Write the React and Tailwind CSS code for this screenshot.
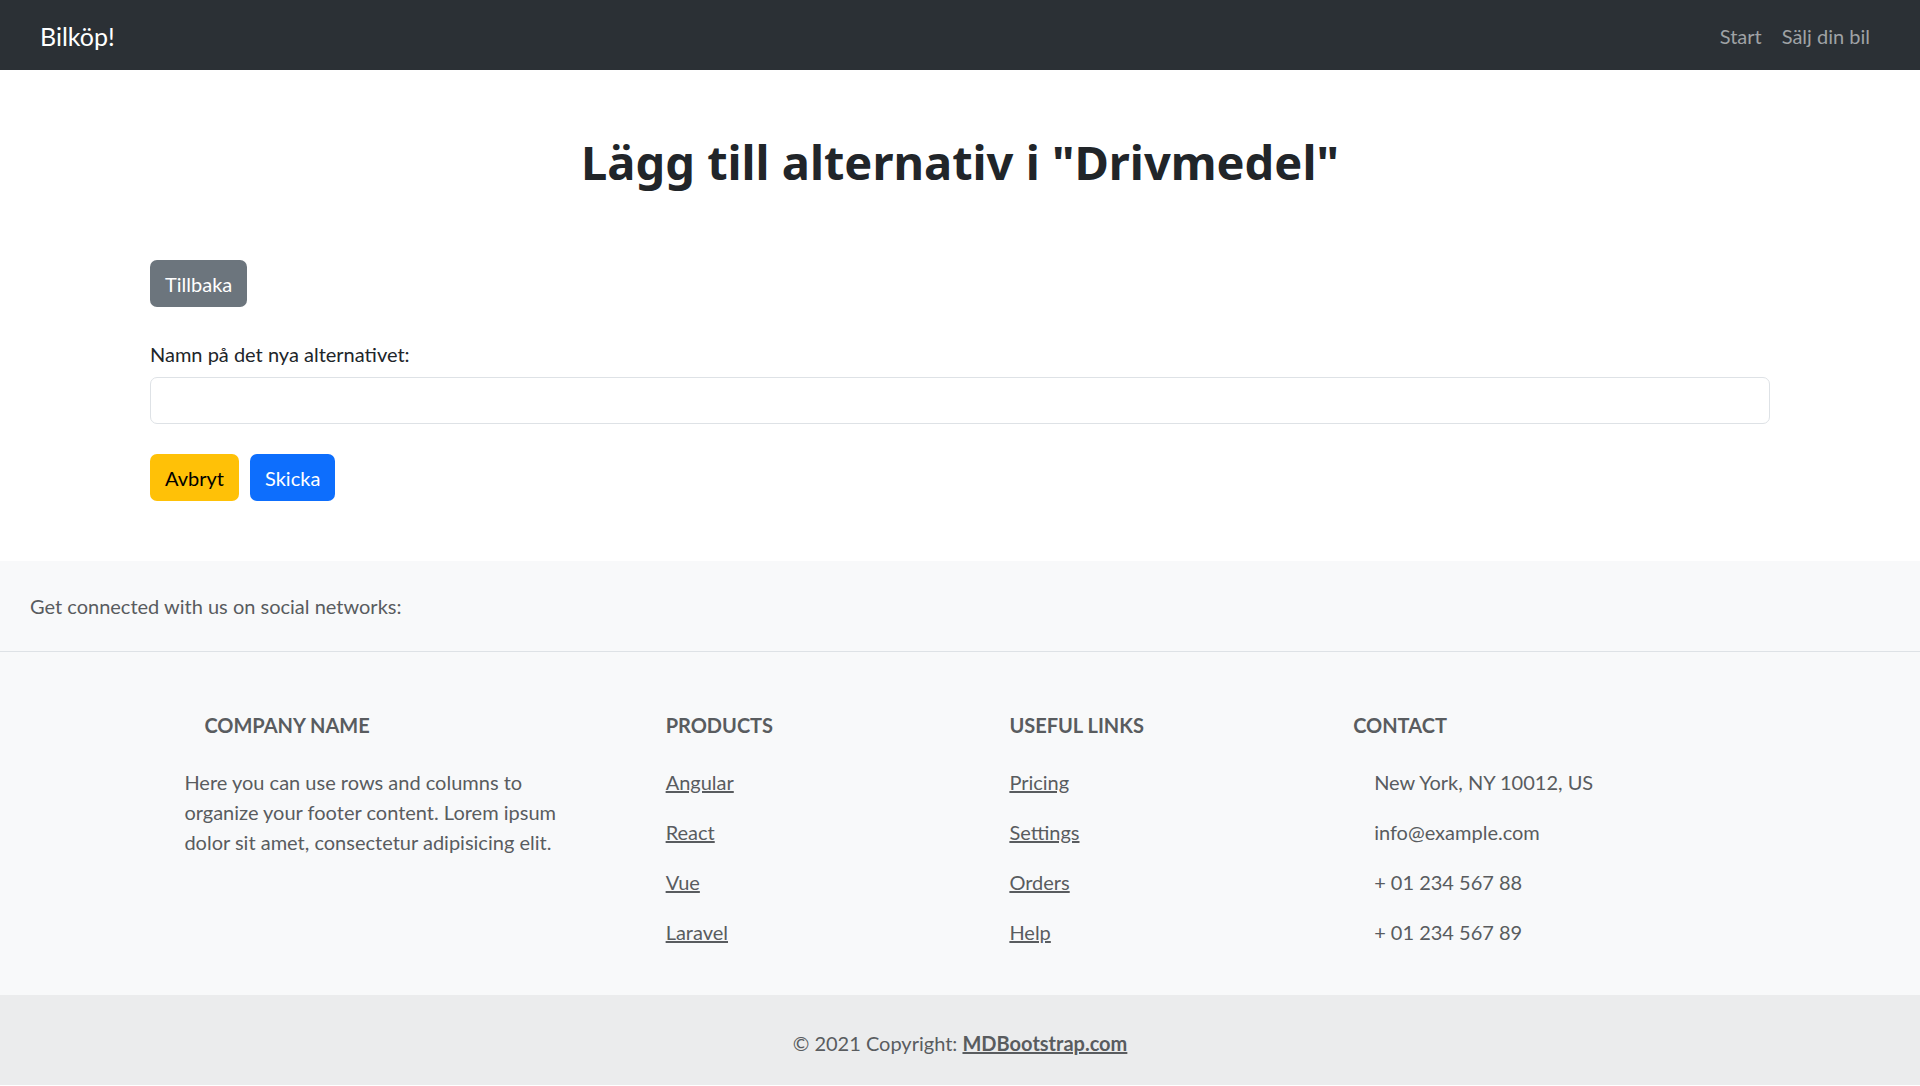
export default function App() {
  return (
    <div className="min-h-screen bg-white font-['Lato','Noto_Sans',sans-serif] text-[20px] leading-[30px] text-[#212529]">
      {/* Navbar */}
      <nav className="h-[70px] bg-[#2b3035] flex items-center justify-between pl-[40px] pr-[40px]">
        <a href="#" className="text-[25px] leading-[37px] mt-[2px] text-white">
          Bilköp!
        </a>
        <div className="flex items-center mt-[2px]">
          <a href="#" className="px-[10px] text-[20px] text-[#9fa2a5]">
            Start
          </a>
          <a href="#" className="px-[10px] text-[20px] text-[#9fa2a5]">
            Sälj din bil
          </a>
        </div>
      </nav>

      {/* Main */}
      <main className="mx-auto w-[1650px] px-[15px]">
        <h1 className="mt-[65px] text-center font-['Noto_Sans',sans-serif] text-[47px] leading-[55px] font-bold text-[#212529]">
          Lägg till alternativ i "Drivmedel"
        </h1>

        <div className="mt-[70px]">
          <button className="h-[47px] px-[15px] rounded-[7px] bg-[#6c757d] text-white text-[20px]">
            Tillbaka
          </button>
        </div>

        <form className="mt-[32px]" onSubmit={(e) => e.preventDefault()}>
          <label className="block text-[20px] leading-[30px]">Namn på det nya alternativet:</label>
          <input
            type="text"
            className="mt-[8px] block w-full h-[47px] rounded-[7px] border border-[#dee2e6] px-[15px] text-[20px] outline-none"
          />
          <div className="mt-[30px] flex gap-[11px]">
            <button type="button" className="h-[47px] px-[15px] rounded-[7px] bg-[#ffc107] text-black text-[20px]">
              Avbryt
            </button>
            <button type="submit" className="h-[47px] px-[15px] rounded-[7px] bg-[#0d6efd] text-white text-[20px]">
              Skicka
            </button>
          </div>
        </form>
      </main>

      {/* Footer */}
      <footer className="mt-[60px] bg-[#f8f9fa] text-[#595c5f]">
        <section className="p-[30px] border-b border-[#dee2e6]">
          <span>Get connected with us on social networks:</span>
        </section>

        <section className="pt-[61px] pb-[48px]">
          <div className="mx-auto w-[1650px] flex">
            <div className="mx-auto w-[412.5px] shrink-0 px-[15px]">
              <h6 className="pl-[20px] text-[20px] leading-[24px] font-bold uppercase">Company name</h6>
              <p className="mt-[30px]">
                Here you can use rows and columns to
                <br />
                organize your footer content. Lorem ipsum
                <br />
                dolor sit amet, consectetur adipisicing elit.
              </p>
            </div>
            <FooterCol title="Products" items={["Angular", "React", "Vue", "Laravel"]} />
            <FooterCol title="Useful links" items={["Pricing", "Settings", "Orders", "Help"]} />
            <div className="mx-auto w-[412.5px] shrink-0 px-[15px]">
              <h6 className="text-[20px] leading-[24px] font-bold uppercase">Contact</h6>
              <div className="mt-[30px] flex flex-col gap-[20px]">
                {["New York, NY 10012, US", "info@example.com", "+ 01 234 567 88", "+ 01 234 567 89"].map((t) => (
                  <p key={t} className="pl-[21px]">
                    {t}
                  </p>
                ))}
              </div>
            </div>
          </div>
        </section>

        <div className="bg-[#ebeced] pt-[33px] pb-[27px] text-center">
          © 2021 Copyright:{" "}
          <a href="#" className="font-bold underline">
            MDBootstrap.com
          </a>
        </div>
      </footer>
    </div>
  );
}

function FooterCol({ title, items }) {
  return (
    <div className="mx-auto w-[275px] shrink-0 px-[15px]">
      <h6 className="text-[20px] leading-[24px] font-bold uppercase">{title}</h6>
      <div className="mt-[30px] flex flex-col gap-[20px]">
        {items.map((t) => (
          <p key={t}>
            <a href="#" className="underline">
              {t}
            </a>
          </p>
        ))}
      </div>
    </div>
  );
}
